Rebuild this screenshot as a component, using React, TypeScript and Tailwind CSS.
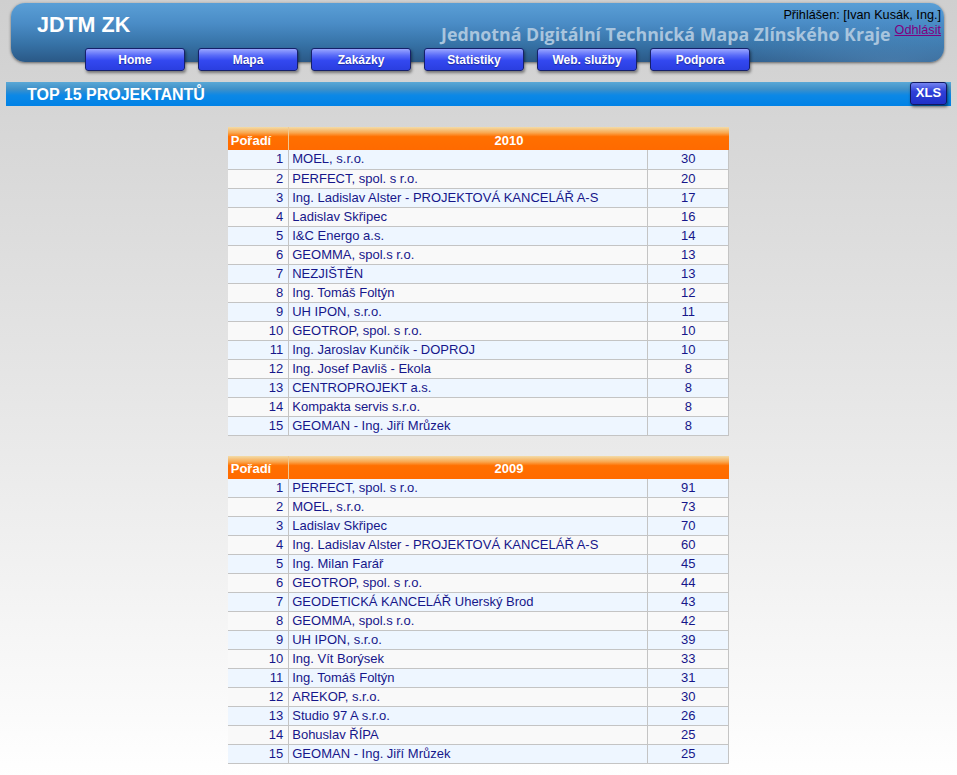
import React from "react";

type Row = { rank: number; name: string; count: number };

const data2010: Row[] = [
  { rank: 1, name: "MOEL, s.r.o.", count: 30 },
  { rank: 2, name: "PERFECT, spol. s r.o.", count: 20 },
  { rank: 3, name: "Ing. Ladislav Alster - PROJEKTOVÁ KANCELÁŘ A-S", count: 17 },
  { rank: 4, name: "Ladislav Skřipec", count: 16 },
  { rank: 5, name: "I&C Energo a.s.", count: 14 },
  { rank: 6, name: "GEOMMA, spol.s r.o.", count: 13 },
  { rank: 7, name: "NEZJIŠTĚN", count: 13 },
  { rank: 8, name: "Ing. Tomáš Foltýn", count: 12 },
  { rank: 9, name: "UH IPON, s.r.o.", count: 11 },
  { rank: 10, name: "GEOTROP, spol. s r.o.", count: 10 },
  { rank: 11, name: "Ing. Jaroslav Kunčík - DOPROJ", count: 10 },
  { rank: 12, name: "Ing. Josef Pavliš - Ekola", count: 8 },
  { rank: 13, name: "CENTROPROJEKT a.s.", count: 8 },
  { rank: 14, name: "Kompakta servis s.r.o.", count: 8 },
  { rank: 15, name: "GEOMAN - Ing. Jiří Mrůzek", count: 8 },
];

const data2009: Row[] = [
  { rank: 1, name: "PERFECT, spol. s r.o.", count: 91 },
  { rank: 2, name: "MOEL, s.r.o.", count: 73 },
  { rank: 3, name: "Ladislav Skřipec", count: 70 },
  { rank: 4, name: "Ing. Ladislav Alster - PROJEKTOVÁ KANCELÁŘ A-S", count: 60 },
  { rank: 5, name: "Ing. Milan Farář", count: 45 },
  { rank: 6, name: "GEOTROP, spol. s r.o.", count: 44 },
  { rank: 7, name: "GEODETICKÁ KANCELÁŘ Uherský Brod", count: 43 },
  { rank: 8, name: "GEOMMA, spol.s r.o.", count: 42 },
  { rank: 9, name: "UH IPON, s.r.o.", count: 39 },
  { rank: 10, name: "Ing. Vít Borýsek", count: 33 },
  { rank: 11, name: "Ing. Tomáš Foltýn", count: 31 },
  { rank: 12, name: "AREKOP, s.r.o.", count: 30 },
  { rank: 13, name: "Studio 97 A s.r.o.", count: 26 },
  { rank: 14, name: "Bohuslav ŘÍPA", count: 25 },
  { rank: 15, name: "GEOMAN - Ing. Jiří Mrůzek", count: 25 },
];

const navItems = ["Home", "Mapa", "Zakázky", "Statistiky", "Web. služby", "Podpora"];

const YearTable: React.FC<{ year: string; rows: Row[] }> = ({ year, rows }) => (
  <table className="w-[501px] mx-auto border-collapse table-fixed text-[13px] leading-[18px]">
    <colgroup>
      <col className="w-[61px]" />
      <col className="w-[359px]" />
      <col className="w-[81px]" />
    </colgroup>
    <thead>
      <tr className="h-[23px] bg-[linear-gradient(180deg,#f3dca8_0%,#f9a850_25%,#ff7000_42%,#ff6a00_100%)] text-white">
        <th className="text-left pl-[3px] pt-[4px] border-r border-[#f0c890] font-bold">Pořadí</th>
        <th colSpan={2} className="text-center pt-[4px] font-bold">{year}</th>
      </tr>
    </thead>
    <tbody className="text-[#16168a]">
      {rows.map((r) => (
        <tr key={r.rank} className={r.rank % 2 === 1 ? "h-[19px] bg-[#eef6ff]" : "h-[19px] bg-[#f9f9f9]"}>
          <td className="text-right pr-[5px] border-r border-b border-[#c4c4c4]">{r.rank}</td>
          <td className="pl-[3px] border-r border-b border-[#c4c4c4] whitespace-nowrap">{r.name}</td>
          <td className="text-center border-r border-b border-[#c4c4c4]">{r.count}</td>
        </tr>
      ))}
    </tbody>
  </table>
);

export default function App() {
  return (
    <div className="min-h-screen bg-[linear-gradient(180deg,#cfcfcf_0%,#e6e6e6_50%,#ffffff_100%)] font-['Liberation_Sans',Arial,sans-serif] pb-4">
      {/* Header */}
      <div className="pl-[11px] pr-[13px] pt-[3px]">
        <div className="relative h-[59px] rounded-[14px] bg-[linear-gradient(180deg,#5a9fd6_0%,#4a8cc6_35%,#3672a6_70%,#2a5886_100%)] shadow-[0_1px_3px_rgba(0,0,0,0.55)] overflow-hidden">
          <div className="absolute right-0 bottom-0 w-[260px] h-[40px] bg-[radial-gradient(ellipse_at_80%_100%,rgba(120,180,230,0.35),transparent_70%)]" />
          <div className="relative flex justify-between">
            <div className="pl-[26px] pt-[10px] text-white font-bold text-[21.5px] leading-[24px]">JDTM ZK</div>
            <div className="flex flex-col items-end pr-[3px] pt-[5px]">
              <div className="text-black text-[12.67px] leading-[15px]">Přihlášen: [Ivan Kusák, Ing.]</div>
              <div className="flex items-start">
                <div className="-mt-[1px] pr-[4px] font-['Open_Sans',sans-serif] font-bold text-[17.75px] leading-[24px] text-[#a9c5de]">
                  Jednotná Digitální Technická Mapa Zlínského Kraje
                </div>
                <a href="#" className="text-[#800080] underline text-[12.67px] leading-[15px]">Odhlásit</a>
              </div>
            </div>
          </div>
        </div>
        <div className="relative flex gap-[13px] pl-[74px] -mt-[14px]">
          {navItems.map((n) => (
            <a
              key={n}
              href="#"
              className="w-[100px] h-[23px] flex items-center justify-center rounded-[3px] border border-[#15206a] bg-[linear-gradient(180deg,#9aa6ff_0%,#5a6cf8_30%,#3348f0_55%,#2a3ee0_100%)] text-white font-bold text-[12px] shadow-[1px_2px_3px_rgba(0,0,0,0.45)] [text-shadow:0_1px_1px_rgba(0,0,40,0.4)]"
            >
              {n}
            </a>
          ))}
        </div>
      </div>

      {/* Title bar */}
      <div className="mx-[6px] mt-[11px] h-[24px] flex items-center justify-between bg-[linear-gradient(180deg,#5aa8d6_0%,#3f90c8_30%,#0c88e6_55%,#0082e6_100%)]">
        <div className="pl-[21px] pt-[1px] text-white font-bold text-[16px]">TOP 15 PROJEKTANTŮ</div>
        <a
          href="#"
          className="mr-[4px] -mt-[2px] w-[37px] h-[23px] flex items-center justify-center rounded-[3px] border border-[#101860] bg-[linear-gradient(180deg,#7484f0_0%,#3040d8_40%,#2030c8_100%)] text-white font-bold text-[13px] shadow-[1px_2px_3px_rgba(0,0,0,0.5)]"
        >
          XLS
        </a>
      </div>

      {/* Tables */}
      <div className="mt-[21px] flex flex-col gap-[20px]">
        <YearTable year="2010" rows={data2010} />
        <YearTable year="2009" rows={data2009} />
      </div>
    </div>
  );
}
